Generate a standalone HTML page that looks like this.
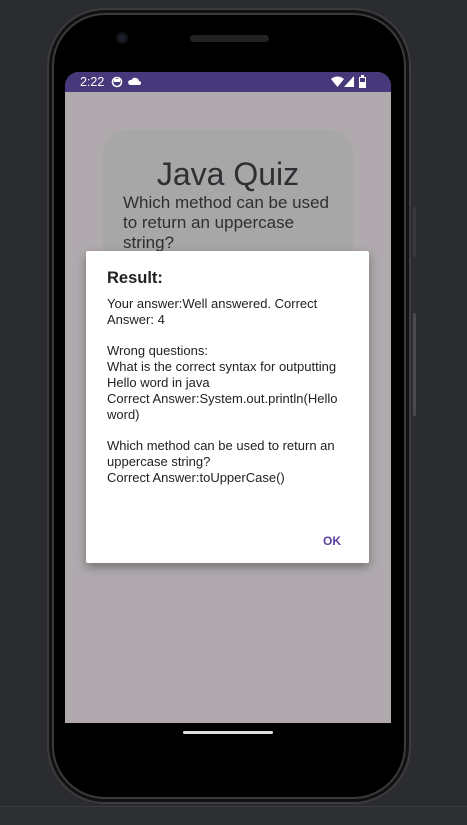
<!DOCTYPE html>
<html><head><meta charset="utf-8"><style>
*{margin:0;padding:0;box-sizing:border-box}
body{width:467px;height:825px;background:#2b2c30;position:relative;overflow:hidden;font-family:"Liberation Sans",sans-serif}
.bottomband{position:absolute;left:0;top:806px;width:467px;height:19px;background:#2e2f33;border-top:1px solid #3a3b3f}
.phone{position:absolute;left:47px;top:8px;width:364px;height:796px;border-radius:58px;background:#000;border:2px solid #3c3c3e;box-shadow:inset 0 0 0 3px #111,inset 0 0 0 5px #3a3a3c}
.btn{position:absolute;left:413px;width:3px;background:#3a3a3e;border-radius:1px}
.screen{position:absolute;left:65px;top:72px;width:326px;height:651px;background:#b0aaae;border-radius:14px 14px 0 0;overflow:hidden}
.sb{height:20px;background:#46387a;color:#fff;font-size:12.5px;position:relative}
.card{position:absolute;left:38px;top:58px;width:250px;height:200px;background:#a8a7a8;border-radius:22px}
.title{position:absolute;top:26px;width:100%;text-align:center;font-size:32px;color:#2f2f33}
.q{position:absolute;left:20px;top:63px;font-size:17px;line-height:20px;color:#2f2f33;width:220px}
.dlg{position:absolute;left:86px;top:251px;width:283px;height:312px;background:#fff;border-radius:2px;box-shadow:0 4px 10px rgba(0,0,0,.35)}
.dlg h2{position:absolute;left:21px;top:18px;font-size:16.5px;font-weight:bold;color:#222}
.dlg p{position:absolute;left:21px;top:45px;font-size:13px;line-height:15.8px;color:#222;width:250px}
.ok{position:absolute;right:28px;top:283px;font-size:12px;font-weight:bold;color:#5b3fa0}
.home{position:absolute;left:183px;top:731px;width:90px;height:3px;background:#ddd;border-radius:2px}
</style></head><body>
<div class="bottomband"></div>
<div class="btn" style="top:207px;height:50px"></div>
<div class="btn" style="top:313px;height:103px;background:#4a4a4e"></div>
<div class="phone"></div>
<div style="position:absolute;left:116px;top:32px;width:12px;height:12px;border-radius:50%;background:#1a1e2a;border:2px solid #111"></div>
<div style="position:absolute;left:190px;top:35px;width:79px;height:7px;border-radius:4px;background:#222;"></div>
<div class="screen">
 <div class="sb">
  <span style="position:absolute;left:15px;top:3px">2:22</span>
  <svg style="position:absolute;left:46px;top:4px" width="12" height="12" viewBox="0 0 12 12"><circle cx="6" cy="6" r="4.5" fill="none" stroke="#fff" stroke-width="1.6"/><rect x="3" y="3" width="6" height="3" fill="#fff"/></svg>
  <svg style="position:absolute;left:63px;top:5px" width="13" height="9" viewBox="0 0 13 9"><path d="M2 8h9a2 2 0 0 0 0-4 4 4 0 0 0-7.5-1A2.5 2.5 0 0 0 2 8z" fill="#fff"/></svg>
  <svg style="position:absolute;left:266px;top:4px" width="13" height="11" viewBox="0 0 13 11"><path d="M0 3Q6.5-2 13 3L6.5 11z" fill="#fff"/></svg>
  <svg style="position:absolute;left:279px;top:4px" width="10" height="11" viewBox="0 0 10 11"><path d="M10 0V11H0z" fill="#fff"/></svg>
  <svg style="position:absolute;left:294px;top:3px" width="8" height="13" viewBox="0 0 8 13"><rect x="0" y="2" width="7" height="11" fill="#fff"/><rect x="2" y="0" width="3" height="2" fill="#fff"/><rect x="1" y="3" width="5" height="4" fill="#46387a"/></svg>
 </div>
 <div class="card">
  <div class="title">Java Quiz</div>
  <div class="q">Which method can be used to return an uppercase string?</div>
 </div>
</div>
<div class="dlg">
 <h2>Result:</h2>
 <p>Your answer:Well answered. Correct Answer: 4<br><br>Wrong questions:<br>What is the correct syntax for outputting Hello word in java<br>Correct Answer:System.out.println(Hello word)<br><br>Which method can be used to return an uppercase string?<br>Correct Answer:toUpperCase()</p>
 <div class="ok">OK</div>
</div>
<div class="home"></div>
</body></html>
